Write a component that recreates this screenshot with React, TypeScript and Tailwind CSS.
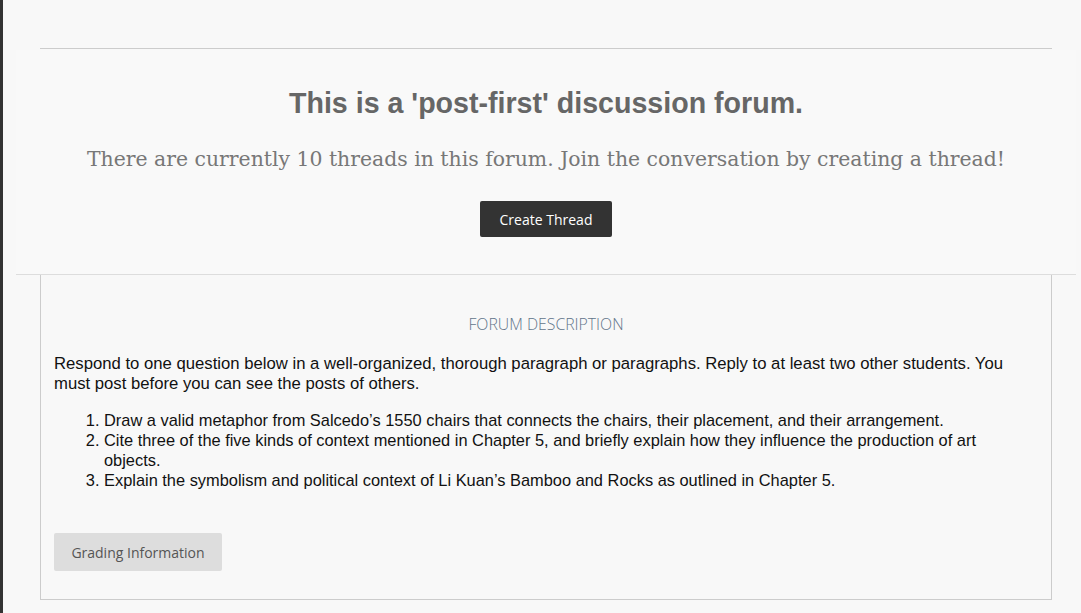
import React from "react";

const questions = [
  "Draw a valid metaphor from Salcedo’s 1550 chairs that connects the chairs, their placement, and their arrangement.",
  "Cite three of the five kinds of context mentioned in Chapter 5, and briefly explain how they influence the production of art objects.",
  "Explain the symbolism and political context of Li Kuan’s Bamboo and Rocks as outlined in Chapter 5.",
];

const openSans = "font-['Open_Sans',sans-serif]";

export default function App() {
  return (
    <div className="min-h-[613px] bg-[#f8f8f8] border-l-[3px] border-[#333] pt-[48px]">
      <div className="ml-[37px] mr-[29px] h-px bg-[#ccc]" />

      {/* post-first banner */}
      <div className="ml-[13px] mr-[5px] mt-px bg-[#f9f9f9] border-b border-[#ddd] pt-[38px] pb-[37px] flex flex-col items-center">
        <h1 className="font-['Liberation_Sans',Arial,sans-serif] font-bold text-[28.6px] leading-[31px] text-[#666]">
          This is a 'post-first' discussion forum.
        </h1>
        <p className="mt-[24px] font-['DejaVu_Serif',Georgia,serif] text-[20.4px] leading-[32px] text-[#777]">
          There are currently 10 threads in this forum. Join the conversation by creating a thread!
        </p>
        <button
          className={`mt-[26px] h-[36px] w-[132px] rounded-[2px] bg-[#333] text-white text-[14px] ${openSans}`}
        >
          Create Thread
        </button>
      </div>

      {/* forum description */}
      <div className="ml-[37px] mr-[29px] border border-t-0 border-[#ccc] px-[13px] pt-[38px] pb-[28px]">
        <h2
          className={`text-center text-[15.8px] leading-[22px] font-light text-[#62758a] ${openSans}`}
        >
          FORUM DESCRIPTION
        </h2>
        <div className="mt-[19px] font-['Liberation_Sans',Arial,sans-serif] text-[16.4px] leading-[20px] text-[#111]">
          <p className="pr-[30px] text-[16.7px]">
            Respond to one question below in a well-organized, thorough paragraph or paragraphs. Reply to at least two
            other students. You must post before you can see the posts of others.
          </p>
          <ol className="mt-[16px] list-decimal pl-[50px] pr-[30px]">
            {questions.map((q) => (
              <li key={q}>{q}</li>
            ))}
          </ol>
        </div>
        <button
          className={`mt-[43px] h-[38px] w-[168px] rounded-[2px] bg-[#ddd] text-[#555] text-[14px] ${openSans}`}
        >
          Grading Information
        </button>
      </div>
    </div>
  );
}
